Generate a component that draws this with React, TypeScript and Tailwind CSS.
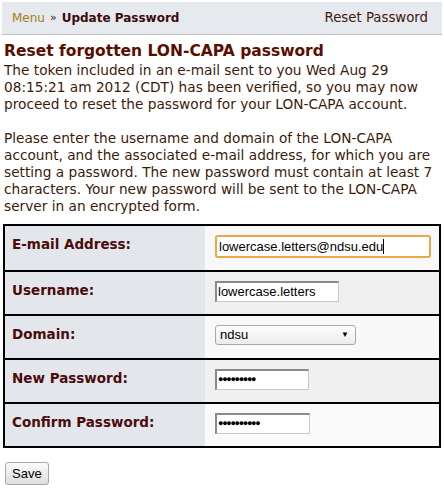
import React from "react";

const sans = { fontFamily: '"DejaVu Sans", Verdana, sans-serif' };

export default function App() {
  const rows: { label: string; field: React.ReactNode; bg: string }[] = [
    {
      label: "E-mail Address:",
      bg: "bg-[#f8f8f8]",
      field: (
        <div className="w-[216px] h-[23px] border-2 border-[#e9a84a] rounded-[3px] bg-white flex items-center pl-[2px] text-[13px] text-black font-['Liberation_Sans',Arial,sans-serif]">
          lowercase.letters@ndsu.edu<span className="inline-block w-px h-[15px] bg-black" />
        </div>
      ),
    },
    {
      label: "Username:",
      bg: "bg-[#f0f0f0]",
      field: (
        <div className="w-[124px] h-[21px] border border-[#c8c8c8] border-t-[#8a8a8a] border-l-[#8a8a8a] border-t-2 border-l-2 bg-white flex items-center pl-[1px] text-[13px] text-black font-['Liberation_Sans',Arial,sans-serif]">
          lowercase.letters
        </div>
      ),
    },
    {
      label: "Domain:",
      bg: "bg-[#f8f8f8]",
      field: (
        <div className="w-[141px] h-[20px] border border-[#a8a8a8] rounded-[3px] bg-gradient-to-b from-[#fdfdfd] to-[#ececec] flex items-center justify-between pl-[4px] pr-[6px] text-[13px] text-black font-['Liberation_Sans',Arial,sans-serif]">
          <span>ndsu</span>
          <span className="text-[8px] leading-none">▼</span>
        </div>
      ),
    },
    {
      label: "New Password:",
      bg: "bg-[#f0f0f0]",
      field: (
        <div className="w-[94px] h-[21px] border border-[#c8c8c8] border-t-[#8a8a8a] border-l-[#8a8a8a] border-t-2 border-l-2 bg-white flex items-center pl-[1px] text-[9px] tracking-[-1.3px] text-black font-['Liberation_Sans',Arial,sans-serif]">
          ●●●●●●●●●
        </div>
      ),
    },
    {
      label: "Confirm Password:",
      bg: "bg-[#fafafa]",
      field: (
        <div className="w-[95px] h-[21px] border border-[#c8c8c8] border-t-[#8a8a8a] border-l-[#8a8a8a] border-t-2 border-l-2 bg-white flex items-center pl-[1px] text-[9px] tracking-[-1.3px] text-black font-['Liberation_Sans',Arial,sans-serif]">
          ●●●●●●●●●●
        </div>
      ),
    },
  ];

  return (
    <div className="w-[444px] h-[488px] bg-white overflow-hidden text-[#3d1a0b]" style={sans}>
      <div className="mx-[2px] mt-[2px] h-[33px] bg-[#e6e9ee] border-b border-[#c0c0c0] flex items-center justify-between pl-[10px] pr-[14px]">
        <div className="text-[12px] flex items-center gap-[5px]">
          <span className="text-[#a77e1c]">Menu</span>
          <span className="text-[#3d1a0b] text-[11px]">»</span>
          <span className="font-bold text-[#3a0c0c]">Update Password</span>
        </div>
        <div className="text-[13.3px] text-[#3d1a0b]">Reset Password</div>
      </div>

      <div className="px-[4px]">
        <h1 className="mt-[6px] text-[15.5px] font-bold leading-[20px] text-[#5a0e00]">
          Reset forgotten LON-CAPA password
        </h1>
        <p className="text-[13.7px] leading-[17px] mt-[1px]">
          The token included in an e-mail sent to you Wed Aug 29 08:15:21 am 2012 (CDT) has been verified, so you may now proceed to reset the password for your LON-CAPA account.
        </p>
        <p className="text-[13.7px] leading-[17px] mt-[17px]">
          Please enter the username and domain of the LON-CAPA account, and the associated e-mail address, for which you are setting a password. The new password must contain at least 7 characters. Your new password will be sent to the LON-CAPA server in an encrypted form.
        </p>
      </div>

      <div className="mx-[3px] mt-[9px] border-2 border-black">
        {rows.map((r, i) => (
          <div
            key={r.label}
            className={`flex h-[44px] ${i > 0 ? "border-t-2 border-black" : ""}`}
          >
            <div className="w-[200px] bg-[#e3e6eb] pl-[7px] pt-[8px] text-[13.5px] font-bold text-[#4a0c0c]">
              {r.label}
            </div>
            <div className={`flex-1 ${r.bg} pl-[10px] pt-[9px]`}>{r.field}</div>
          </div>
        ))}
      </div>

      <div className="px-[5px] mt-[13px]">
        <button className="h-[23px] px-[6px] border border-[#a8a8a8] rounded-[3px] bg-gradient-to-b from-[#fbfbfb] to-[#dedede] text-[13px] text-black font-['Liberation_Sans',Arial,sans-serif]">
          Save
        </button>
      </div>
    </div>
  );
}
